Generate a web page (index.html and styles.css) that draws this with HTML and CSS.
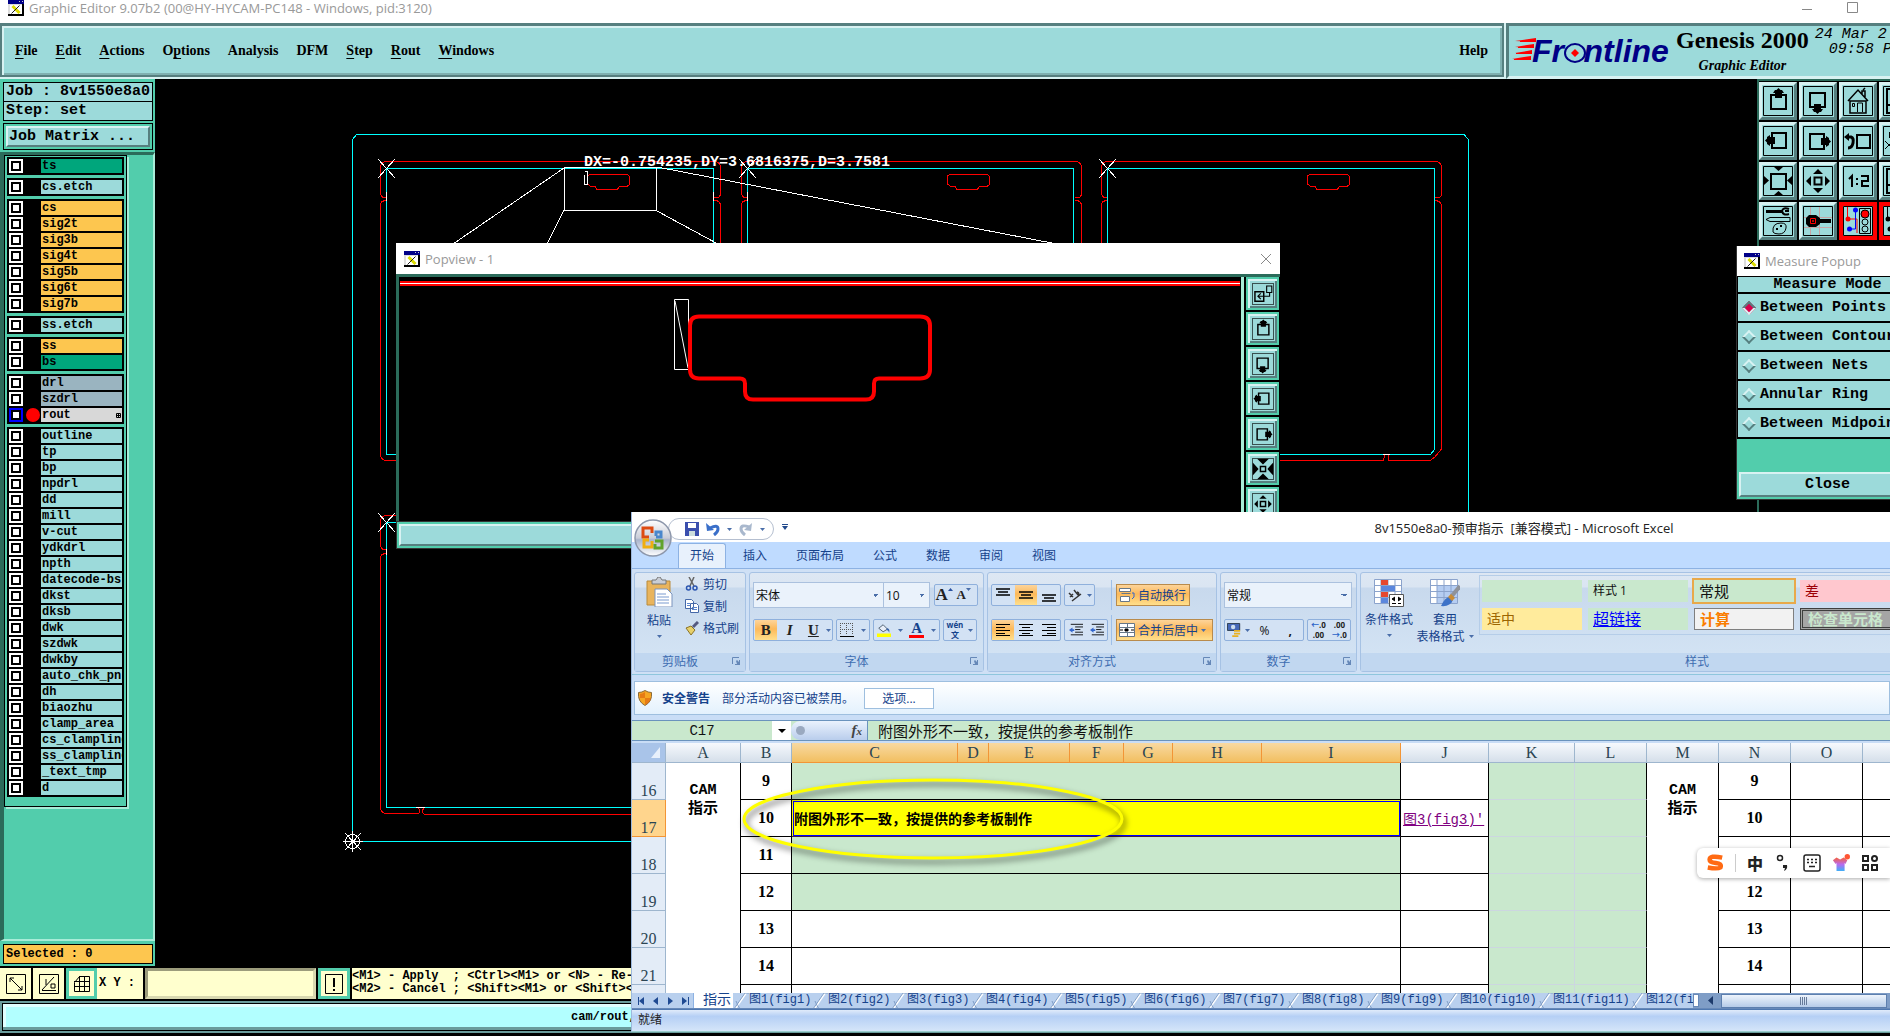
FILE: index.html
```html
<!DOCTYPE html>
<html lang="zh-CN">
<head>
<meta charset="utf-8">
<title>Graphic Editor 9.07b2</title>
<link rel="stylesheet" href="styles.css">
</head>
<body>
<svg class="sprite" aria-hidden="true">
  <symbol id="xwin" viewBox="0 0 16 16"><path fill="#ddd" d="M0 0h16v16H0z"/><path fill="#008" d="M0 0h16v4H0z"/><path fill="#ccc" d="M11 1h1v1h-1zM14 1h1v1h-1z"/><path fill="#fff" d="M2 5h12v9H2z"/><path d="M0 15h16M15 4v12" stroke="#000" stroke-width="2"/><path d="M4.500 6l7 7" stroke="#dd0" stroke-width="3"/><path d="M11.500 5.500l-8 8" stroke="#222" stroke-width="1"/></symbol>
  <symbol id="frame" viewBox="0 0 30 30"><path fill="none" stroke="#000" d="M.5.500h29v29H.5z"/></symbol>
  <symbol id="shift" viewBox="0 0 30 30"><use href="#frame"/><path fill="none" stroke="#000" stroke-width="2" d="M8 9h15v14H8z"/><path d="M15.500 2l2 2h1.500l2 3h-2v5h-7V7h-2l2-3h1.500z"/></symbol>
  <symbol id="left" viewBox="0 0 30 30"><use href="#shift" transform="rotate(-90 15 15)"/></symbol>
  <symbol id="right" viewBox="0 0 30 30"><use href="#shift" transform="rotate(90 15 15)"/></symbol>
  <symbol id="down" viewBox="0 0 30 30"><use href="#shift" transform="rotate(180 15 15)"/></symbol>
  <symbol id="home" viewBox="0 0 30 30"><use href="#frame"/><path fill="none" stroke="#000" stroke-width="1.500" d="M7 15h16v12H7zM5 15l10-11 10 11M19 8V5h3v6M20 4l2-2"/><path fill="none" stroke="#000" d="M14.500 26v-9h5v9M9.500 17.500h2v3h-2z"/></symbol>
  <symbol id="back" viewBox="0 0 30 30"><use href="#frame"/><path fill="none" stroke="#000" stroke-width="2" d="M14 9h13v13H14z"/><path fill="none" stroke="#000" stroke-width="3" d="M4 11h4q3 1 2 6-1 5-5 5"/><path d="M1 11l5-4v8z"/></symbol>
  <symbol id="grow" viewBox="0 0 30 30"><use href="#frame"/><path fill="none" stroke="#000" stroke-width="2" d="M8 8h15v15H8z"/><path d="M11 1h9l-4.500 4zM11 29h9l-4.500-4zM1 10v9l5-4.500zM29 10v9l-5-4.500z"/></symbol>
  <symbol id="spread" viewBox="0 0 30 30"><use href="#frame"/><path fill="none" stroke="#000" stroke-width="2" d="M11.500 11.500h7v7h-7z"/><path d="M10 8h10l-5-5zM10 22h10l-5 5zM8 10v10l-5-5zM22 10v10l5-5z"/></symbol>
  <symbol id="shrink" viewBox="0 0 30 30"><use href="#frame"/><path fill="none" stroke="#000" stroke-width="2" d="M11.500 11.500h7v7h-7z"/><path d="M7 1h16l-8 8zM7 29h16l-8-8zM1 6v18l8-9zM29 6v18l-8-9z"/></symbol>
  <symbol id="popout" viewBox="0 0 30 30"><use href="#frame"/><path fill="none" stroke="#000" stroke-width="2" d="M4 12h12v13H4z"/><path fill="none" stroke="#000" stroke-width="1.500" d="M20 4h7v9h-7zM24 13v5H8m4-4-4 4 4 4"/></symbol>
  <symbol id="ratio" viewBox="0 0 30 30"><use href="#frame"/><path fill="none" stroke="#000" stroke-width="2" d="M6 13l3-3v11M14 12v2M14 17v2M18 10h7v5h-6v5h7"/></symbol>
  <symbol id="tools" viewBox="0 0 30 30"><use href="#frame"/><path d="M3 4h16v3H3z"/><path fill="none" stroke="#000" stroke-width="2" d="M26 3q-6-2-7 2 1 5 7 3M26 5h-4"/><path fill="none" stroke="#000" d="M3 13.500l4-2h20v4H7zM10 26q-1-9 8-9 6 0 5 5-1 6-7 6-5 0-6-2z"/><path d="M13 22h2v2h-2zM17 19h2v2h-2z"/></symbol>
  <symbol id="pad" viewBox="0 0 30 30"><path stroke="#c6a5a5" d="M7.500 0v30M16.500 0v30M0 11.500h30M0 21.500h30"/><use href="#frame"/><path d="M6 9h7l4 3v1h11v4H17v1l-4 3H6l-3-3v-6z"/><path fill="none" stroke="red" d="M7.500 12.500h5v5h-5zM9.500 14.500h1v1h-1z"/></symbol>
  <symbol id="nets" viewBox="0 0 30 30"><use href="#frame"/><path fill="none" stroke="red" d="M4.500 1v12H14v14"/><path fill="none" stroke="#00f" d="M12.500 4v19h-6"/><circle cx="5" cy="13" r="2.500" fill="red"/><circle cx="12.500" cy="4" r="2.500" fill="#00f"/><circle cx="6.500" cy="23" r="2.500" fill="#00f"/><path fill="none" stroke="#000" d="M16.500 2.500h11v25h-11z"/><circle cx="22" cy="8" r="4" fill="red" stroke="#000"/><circle cx="22" cy="16" r="3" fill="none" stroke="#000"/><circle cx="22" cy="23" r="3" fill="none" stroke="#000"/></symbol>
  <symbol id="nets2" viewBox="0 0 30 30"><use href="#frame"/><path fill="none" stroke="#000" d="M4.500 1v12H14M12 23H6"/><circle cx="5" cy="13" r="2.500"/><circle cx="7" cy="23" r="2.500"/></symbol>
  <symbol id="split" viewBox="0 0 30 30"><use href="#frame"/><path fill="none" stroke="#000" stroke-width="2" d="M4 3h22v24H4zM4 19h22"/></symbol>
  <symbol id="cut2" viewBox="0 0 30 30"><use href="#frame"/><path fill="none" stroke="#000" d="M2 15l8 8m-8 0l8-8"/><path d="M6 6h20v6H6z"/></symbol>
  <symbol id="caret" viewBox="0 0 5 3"><path fill="#4a6ea9" d="M0 0h5L2.500 3z"/></symbol>
  <symbol id="launch" viewBox="0 0 8 8"><path fill="none" stroke="#6688b8" d="M7 .5H.5V7"/><path fill="#6688b8" d="M4 4l1-1 2 2V3h1v5H3V7h2z"/></symbol>
  <symbol id="slash" viewBox="0 0 16 16"><path fill="none" stroke="#fff" stroke-width="2" d="M2 16L13 0"/><path fill="none" stroke="#7f9dc6" d="M1 16L12 0M12 0h4M3 8q2 5 4 8"/></symbol>
  <symbol id="lines-l" viewBox="0 0 14 12"><path stroke="#000" d="M0 .5h14M0 3.500h9M0 6.500h14M0 9.500h9M0 11.500h14"/></symbol>
  <symbol id="lines-c" viewBox="0 0 14 12"><path stroke="#000" d="M0 .5h14M3 3.500h8M0 6.500h14M3 9.500h8M0 11.500h14"/></symbol>
  <symbol id="lines-r" viewBox="0 0 14 12"><path stroke="#000" d="M0 .5h14M5 3.500h9M0 6.500h14M5 9.500h9M0 11.500h14"/></symbol>
  <symbol id="three" viewBox="0 0 14 12"><path stroke="#000" stroke-width="1.500" d="M0 3h14M2 6h10M0 9h14"/></symbol>
  <symbol id="indent" viewBox="0 0 16 14"><path stroke="#000" d="M2 .5h14M7 3.500h9M7 6.500h6M7 9.500h9M2 12.500h14"/><path fill="#36c" d="M0 7l4-3v2h2v2H4v2z"/></symbol>
</svg>

<div class="desktop">
<main class="cam">
  <header class="winbar"><svg class="i16"><use href="#xwin"/></svg><span>Graphic Editor 9.07b2 (00@HY-HYCAM-PC148 - Windows, pid:3120)</span>
    <svg class="winbtns" viewBox="0 0 60 16"><path fill="none" stroke="#888" d="M1 9.500h10M46.500 2.500h10v10h-10z"/></svg></header>
  <div class="top">
    <nav class="menubar">
      <button><u>F</u>ile</button><button><u>E</u>dit</button><button><u>A</u>ctions</button><button>O<u>p</u>tions</button><button>Analysis</button><button>DFM</button><button><u>S</u>tep</button><button><u>R</u>out</button><button><u>W</u>indows</button>
      <button class="help">Help</button>
    </nav>
    <div class="brand">
      <svg class="logo" viewBox="0 0 164 34"><path fill="red" d="M24 5v4L3 8l14-2zM22 11v4L3 14l12-2zM20 17v4L3 20l12-2zM19 23v4L0 26l12-2z"/><path stroke="red" d="M8 8.500h16M6 14.500h16M4 20.500h16M2 26.500h17"/><text x="20" y="29" class="logotext">Fr<tspan fill="none">o</tspan>ntline</text><ellipse cx="63" cy="20" rx="10" ry="9" fill="#9cdada" stroke="#000085" stroke-width="2"/><path fill="red" d="M63 16l4 4-4 4-4-4z"/></svg>
      <div class="product"><strong>Genesis 2000</strong><em>Graphic Editor</em></div>
      <div class="clock">24 Mar 2<br><span>09:58 P</span></div>
    </div>
  </div>
  <div class="middle">
    <aside class="side">
      <div class="jobline">Job : 8v1550e8a0</div>
      <div class="jobline">Step: set</div>
      <div class="matrix"><button>Job Matrix ...</button></div>
      <div class="layers"><div class="list">
        <div class="grp"><label class="g"><input type="checkbox"><span>ts</span></label></div>
        <div class="grp"><label><input type="checkbox"><span>cs.etch</span></label></div>
        <div class="grp"><label class="o"><input type="checkbox"><span>cs</span></label><label class="o"><input type="checkbox"><span>sig2t</span></label><label class="o"><input type="checkbox"><span>sig3b</span></label><label class="o"><input type="checkbox"><span>sig4t</span></label><label class="o"><input type="checkbox"><span>sig5b</span></label><label class="o"><input type="checkbox"><span>sig6t</span></label><label class="o"><input type="checkbox"><span>sig7b</span></label></div>
        <div class="grp"><label><input type="checkbox"><span>ss.etch</span></label></div>
        <div class="grp"><label class="o"><input type="checkbox"><span>ss</span></label><label class="g"><input type="checkbox"><span>bs</span></label></div>
        <div class="grp"><label class="s"><input type="checkbox"><span>drl</span></label><label class="s"><input type="checkbox"><span>szdrl</span></label><label class="w"><input type="checkbox" checked><i></i><span>rout<svg viewBox="0 0 5 5"><path fill="none" stroke="#000" d="M.5.500h4v4h-4zM2.500 0v5M0 2.500h5"/></svg></span></label></div>
        <div class="grp"><label><input type="checkbox"><span>outline</span></label><label><input type="checkbox"><span>tp</span></label><label><input type="checkbox"><span>bp</span></label><label><input type="checkbox"><span>npdrl</span></label><label><input type="checkbox"><span>dd</span></label><label><input type="checkbox"><span>mill</span></label><label><input type="checkbox"><span>v-cut</span></label><label><input type="checkbox"><span>ydkdrl</span></label><label><input type="checkbox"><span>npth</span></label><label><input type="checkbox"><span>datecode-bs</span></label><label><input type="checkbox"><span>dkst</span></label><label><input type="checkbox"><span>dksb</span></label><label><input type="checkbox"><span>dwk</span></label><label><input type="checkbox"><span>szdwk</span></label><label><input type="checkbox"><span>dwkby</span></label><label><input type="checkbox"><span>auto_chk_pnl</span></label><label><input type="checkbox"><span>dh</span></label><label><input type="checkbox"><span>biaozhu</span></label><label><input type="checkbox"><span>clamp_area</span></label><label><input type="checkbox"><span>cs_clampline</span></label><label><input type="checkbox"><span>ss_clampline</span></label><label><input type="checkbox"><span>_text_tmp</span></label><label><input type="checkbox"><span>d</span></label></div>
      </div></div>
      <div class="selected">Selected : 0</div>
    </aside>
    <div class="board">
      <svg width="1602" height="887" viewBox="155 79 1602 887" fill="none">
        <g stroke="#0ff" shape-rendering="crispEdges">
          <path d="M352.500 841.500V139.500l4-5H1464l4.500 5V841.500z"/>
          <path d="M386.500 454.500v-286h327v286zM747.500 454.500v-286h326v286zM1107.500 454.500v-286h327v281l-4 5zM386.500 807.500v-285h327v285z"/>
        </g>
        <g stroke="#f00" shape-rendering="crispEdges">
          <path id="rim" d="M386 197q-3 2-5-2l-.5-27q0-6.500 6-6.500H714q6.500 0 6.500 6.500V195q-2 4-6 2M386 201q-4-1-5.500 3v250q0 6 6 6.500H714q6.500 0 6.500-6.500V204q-2-4-6-3"/>
          <use href="#rim" x="361"/>
          <path d="M1107 197q-3 2-5-2l-.5-27q0-6.500 6-6.500H1435q6.500 0 6.500 6.500V195q-2 4-6 2M1107 201q-4-1-5.500 3v250q0 6 6 6.500h276l1-5M1388 455l1 5.500h40q4 0 12-11V204q-2-4-6-3"/>
          <path d="M386 549q-3 2-5-2l-.5-25q0-6.500 6-6.500H714M386 554q-4-1-5.500 3V807q0 6 6 6.500h32q2-2 0-6M424 808q-3 4 0 6h290"/>
          <path id="tab" d="M587.500 176l2-1.500h38l2 2v8l-2 1.500h-8l-2 3.500H597l-2-3.500h-5l-2.500-2z"/>
          <use href="#tab" x="360"/><use href="#tab" x="720"/>
        </g>
        <g stroke="#fff" shape-rendering="crispEdges">
          <path d="M564.500 167.500h92v43h-92zM564 168L453 244M564 210l-17 34M657 211l61 33M657 167L1057 244M585 171.500h2.500v13M584.500 175v9.500h3"/>
          <path d="M378 159l17 19m0-19l-17 19M739 159l17 19m0-19l-17 19M1099 159l17 19m0-19l-17 19M378 513l17 19m0-19l-17 19M386.500 192v9M713.500 192v9M747.500 192v9M1383 454.500h7M416 807.500h9M386.500 549v6"/>
          <path d="M343 841.500h20M352.500 831v21M345 833l16 17m0-17l-16 17"/><circle cx="352.500" cy="841.500" r="7"/>
        </g>
        <text x="584" y="166" class="measure">DX=-0.754235,DY=3.6816375,D=3.7581</text>
      </svg>
    </div>
    <div class="tools">
      <button aria-label="up"><svg><use href="#shift"/></svg></button><button aria-label="down"><svg><use href="#down"/></svg></button><button aria-label="home"><svg><use href="#home"/></svg></button><button aria-label="split"><svg><use href="#split"/></svg></button>
      <button aria-label="left"><svg><use href="#left"/></svg></button><button aria-label="right"><svg><use href="#right"/></svg></button><button aria-label="previous"><svg><use href="#back"/></svg></button><button aria-label="cut"><svg><use href="#cut2"/></svg></button>
      <button aria-label="zoom in"><svg><use href="#grow"/></svg></button><button aria-label="zoom out"><svg><use href="#spread"/></svg></button><button aria-label="ratio"><svg><use href="#ratio"/></svg></button><button aria-label="window"><svg><use href="#split"/></svg></button>
      <button aria-label="tools"><svg><use href="#tools"/></svg></button><button aria-label="pad"><svg><use href="#pad"/></svg></button><button class="on" aria-label="nets"><svg><use href="#nets"/></svg></button><button class="on" aria-label="nets two"><svg><use href="#nets2"/></svg></button>
    </div>
  </div>
  <div class="cmd">
    <button aria-label="drag"><svg viewBox="0 0 22 22"><path fill="none" stroke="#000" d="M1.500 1.500h19v19h-19zM5 5l12 12M5 9V5h4M17 13v4h-4"/></svg></button>
    <button aria-label="angle"><svg viewBox="0 0 22 22"><path fill="none" stroke="#000" d="M1.500 1.500h19v19h-19zM4 17.500h14M4 17L16 4M8 6v6M13 11h4v4h-4z"/></svg></button>
    <button class="lit" aria-label="grid"><svg viewBox="0 0 22 22"><path fill="none" stroke="#000" d="M3.500 9.500l5-6h10v15h-15zM3 8.500h16M3 13.500h16M8.500 3v16M13.500 3v16"/></svg></button>
    <label for="xy">X Y :</label><input id="xy" type="text">
    <button class="lit bang" aria-label="alert"><svg viewBox="0 0 22 22"><path fill="none" stroke="#000" d="M2.500 1.500h17v19h-17z"/><path d="M10 5h2v9h-2zM10 16h2v2h-2z"/></svg></button>
    <pre>&lt;M1&gt; - Apply  ; &lt;Ctrl&gt;&lt;M1&gt; or &lt;N&gt; - Re-s
&lt;M2&gt; - Cancel ; &lt;Shift&gt;&lt;M1&gt; or &lt;Shift&gt;&lt;N</pre>
  </div>
  <footer class="camstatus"><span>cam/rout,</span></footer>
</main>

<section class="popview">
  <header><svg class="i16"><use href="#xwin"/></svg><span>Popview - 1</span><svg class="x" viewBox="0 0 12 12"><path stroke="#888" d="M1 1l10 10M11 1L1 11"/></svg></header>
  <div class="pbody">
    <div class="pcanvas"><svg width="842" height="243" viewBox="399 277 842 243" fill="none"><path stroke="#f00" stroke-width="5" d="M400 283.500h840"/><path stroke="#fff" d="M400 283.500h840M674.500 299.500h14v70h-14zM675 301l13 67"/><path stroke="#f00" stroke-width="4" d="M699 316.500h221q10 0 10 9v44q0 9-10 9h-41q-5 0-5 5v8q0 8-8 8H753q-8 0-8-8v-8q0-5-5-5h-41q-9 0-9-9v-44q0-9 9-9z"/></svg></div>
    <div class="ptools">
      <button aria-label="pop"><svg><use href="#popout"/></svg></button><button aria-label="up"><svg><use href="#shift"/></svg></button><button aria-label="down"><svg><use href="#down"/></svg></button><button aria-label="left"><svg><use href="#left"/></svg></button><button aria-label="right"><svg><use href="#right"/></svg></button><button aria-label="in"><svg><use href="#shrink"/></svg></button><button aria-label="out"><svg><use href="#spread"/></svg></button>
    </div>
  </div>
  <div class="pfoot"><div></div></div>
</section>

<section class="popup">
  <header><svg class="i16"><use href="#xwin"/></svg><span>Measure Popup</span></header>
  <h2>Measure Mode</h2>
  <label><input type="radio" name="mode" checked><i></i>Between Points</label>
  <label><input type="radio" name="mode"><i></i>Between Contours</label>
  <label><input type="radio" name="mode"><i></i>Between Nets</label>
  <label><input type="radio" name="mode"><i></i>Annular Ring</label>
  <label><input type="radio" name="mode"><i></i>Between Midpoint</label>
  <div class="close"><button>Close</button></div>
</section>

<section class="excel">
  <header class="xtitle">
    <svg class="orb" viewBox="0 0 40 40"><defs><linearGradient id="og" x2="0" y2="1"><stop offset="0" stop-color="#fff"/><stop offset=".5" stop-color="#c9cdd8"/><stop offset=".55" stop-color="#a9b4cc"/><stop offset="1" stop-color="#fff"/></linearGradient></defs><circle cx="20" cy="20" r="18" fill="url(#og)" stroke="#8d97ab" stroke-width="1.500"/><g fill="none" stroke-width="3"><path stroke="#dd4b12" d="M16 19h-6V10h9v5"/><path stroke="#4a87cc" d="M23 18v-4h5v5h-5"/><path stroke="#f0ae10" d="M16 22h-5v7h8v-6"/><path stroke="#61a32c" d="M22 23h7v7h-7v-4"/></g></svg>
    <div class="qat">
      <svg viewBox="0 0 14 14"><path fill="#3b4fae" d="M0 0h14v14H0z"/><path fill="#fff" d="M3 1h8v5H3z"/><path fill="#cdd" d="M4 9h6v5H4z"/></svg>
      <svg viewBox="0 0 14 14"><path fill="none" stroke="#3a6fc9" stroke-width="3" d="M4 6q8-4 8 1 0 3-4 6"/><path fill="#3a6fc9" d="M0 1l1 8 7-1z"/></svg>
      <svg class="c"><use href="#caret"/></svg>
      <svg viewBox="0 0 14 14"><path fill="none" stroke="#a9b8cd" stroke-width="3" d="M10 5Q2 2 2 7q0 3 4 6"/><path fill="#a9b8cd" d="M13 1l-1 8-7-1z"/></svg>
      <svg class="c"><use href="#caret"/></svg>
    </div>
    <svg class="more" viewBox="0 0 6 6"><path fill="#224a8d" d="M0 0h6v1H0zM0 2h6L3 6z"/></svg>
    <h1>8v1550e8a0-预审指示&nbsp; [兼容模式] - Microsoft Excel</h1>
  </header>
  <nav class="xtabs"><button class="on">开始</button><button>插入</button><button>页面布局</button><button>公式</button><button>数据</button><button>审阅</button><button>视图</button></nav>
  <div class="ribbon">
    <div class="rg clip"><div class="rc">
      <button class="big"><svg viewBox="0 0 27 30"><path fill="#e9b45c" stroke="#b98a3a" d="M1 4h23v24H1z"/><path fill="#c9cdd5" stroke="#777" d="M6 3h4l2-3h2l2 3h4v4H6z"/><path fill="#fff" stroke="#7a93bd" d="M9 12h12l5 5v13H9z"/><path stroke="#7a9bd0" d="M11 17h9M11 20h12M11 23h12M11 26h12"/></svg>粘贴<svg class="c"><use href="#caret"/></svg></button>
      <div class="stack">
        <button><svg viewBox="0 0 14 14"><path stroke="#666" stroke-width="1.500" d="M4 0l5 9M9 0L5 9"/><circle cx="3.500" cy="11" r="2" fill="none" stroke="#2b55b0" stroke-width="1.500"/><circle cx="10" cy="11" r="2" fill="none" stroke="#2b55b0" stroke-width="1.500"/></svg>剪切</button>
        <button><svg viewBox="0 0 14 14"><path fill="#fff" stroke="#4568a8" d="M.5.500h6l2 2v7h-8zM5.500 4.500h6l2 2v7h-8z"/><path stroke="#5b85cc" d="M7 8.500h5M7 10.500h5M2 4.500h3M2 6.500h3"/></svg>复制</button>
        <button><svg viewBox="0 0 14 14"><path fill="#e7d06a" stroke="#8a7328" d="M1 7l5-2 4 4-4 5z"/><path stroke="#555a80" stroke-width="3" d="M8 6l5-5"/></svg>格式刷</button>
      </div></div><h3>剪贴板<svg><use href="#launch"/></svg></h3></div>
    <div class="rg font"><div class="rc rows">
      <div><select class="ff" aria-label="font"><option>宋体</option></select><select class="fs" aria-label="size"><option>10</option></select>
        <span class="bx gap3"><button class="ser b18">A<svg viewBox="0 0 5 3"><path fill="#2a52a0" d="M0 3h5L2.500 0z"/></svg></button><button class="ser b14">A<svg><use href="#caret"/></svg></button></span></div>
      <div><span class="bx biu"><button class="ser on">B</button><button class="ser it">I</button><button class="ser un">U</button><svg class="c"><use href="#caret"/></svg></span>
        <span class="bx w34"><svg viewBox="0 0 14 14"><path stroke="#555" stroke-dasharray="1 1" d="M.5 0v12M6.500 0v12M12.500 0v12M0 .5h13M0 6.500h13"/><path stroke="#000" d="M0 13.500h14"/></svg><svg class="c"><use href="#caret"/></svg></span>
        <span class="bx w66"><svg viewBox="0 0 16 16"><path fill="#e8eef8" stroke="#456" d="M2 6l5-4 5 5-5 3z"/><path fill="#3d66aa" d="M11 6q4 0 3 5-1-3-3-3z"/><path fill="#ff0" d="M0 12h16v4H0z"/></svg><svg class="c"><use href="#caret"/></svg><b class="acol">A</b><svg class="c"><use href="#caret"/></svg></span>
        <span class="bx w34"><b class="wen"><span>wén</span><span>文</span></b><svg class="c"><use href="#caret"/></svg></span></div>
      </div><h3>字体<svg><use href="#launch"/></svg></h3></div>
    <div class="rg align"><div class="rc rows">
      <div><span class="bx tri"><button aria-label="top"><svg class="up"><use href="#three"/></svg></button><button class="on" aria-label="middle"><svg><use href="#three"/></svg></button><button aria-label="bottom"><svg class="dn"><use href="#three"/></svg></button></span>
        <span class="bx w31"><svg viewBox="0 0 14 14"><path stroke="#333" stroke-width="1.500" fill="none" d="M4 13L13 6M1 5l4 4M2 9l3-3M6 2l4 5q2-2-1-3"/></svg><svg class="c"><use href="#caret"/></svg></span><hr>
        <button class="hot w74"><svg viewBox="0 0 16 14"><path fill="#fff" stroke="#678" d="M.5.500h11v3H.5zM2.500 5.500h9M1.500 8.500h9v5h-9z"/><path fill="none" stroke="#36c" d="M13 5h2v4l-2 2"/></svg>自动换行</button></div>
      <div><span class="bx tri"><button class="on" aria-label="left"><svg><use href="#lines-l"/></svg></button><button aria-label="center"><svg><use href="#lines-c"/></svg></button><button aria-label="right"><svg><use href="#lines-r"/></svg></button></span>
        <span class="bx w44"><svg><use href="#indent"/></svg><svg><use href="#indent"/></svg></span><hr>
        <button class="hot w96"><svg viewBox="0 0 16 14"><path fill="#fff" stroke="#678" d="M.5.500h15v13H.5zM0 4.500h16M0 9.500h16M8.500 0v4M8.500 10v4"/><path stroke="#000" d="M1 7h3M12 7h3M6 6h3v2H6z"/></svg>合并后居中<svg class="c"><use href="#caret"/></svg></button></div>
      </div><h3>对齐方式<svg><use href="#launch"/></svg></h3></div>
    <div class="rg num"><div class="rc rows">
      <div><select class="nf" aria-label="number format"><option>常规</option></select></div>
      <div><span class="bx w79"><svg viewBox="0 0 16 16"><path fill="#4568b8" stroke="#234" d="M.5.500h14v8h-14z"/><circle cx="7" cy="4.500" r="2.500" fill="#cde"/><path fill="#e8b020" d="M8 8h7v2H8zM8 11h7v2H8zM6 14h7v2H6z"/></svg><svg class="c"><use href="#caret"/></svg><button>%</button><button><b>,</b></button></span>
        <span class="bx w44 dec"><b><span><i>←</i>.0</span><span>.00</span></b><b><span>.00</span><span><i>→</i>.0</span></b></span></div>
      </div><h3>数字<svg><use href="#launch"/></svg></h3></div>
    <div class="rg sty"><div class="rc">
      <button class="big b48"><svg viewBox="0 0 30 28"><path fill="#fff" stroke="#8ba3cc" d="M.5.500h27v24H.5zM7 0v25M14 0v25M21 0v25M0 6.500h28M0 12.500h28M0 18.500h28"/><path fill="#e5482f" d="M7 1h7v5H7zM7 13h7v5H7z"/><path fill="#5b87dd" d="M7 7h14v5H7zM7 19h7v5H7z"/><path fill="#fff" stroke="#555" d="M15.500 15.500h14v12h-14z"/><path stroke="#000" d="M21 18l-3 2 3 2M18 24.500h4M24 18l3 2-3 2M24 24.500h3"/></svg>条件格式<svg class="c"><use href="#caret"/></svg></button>
      <button class="big b48"><svg viewBox="0 0 30 28"><path fill="#fff" stroke="#8ba3cc" d="M.5.500h27v24H.5z"/><path fill="#b5cdf2" d="M7 7h20v17H7z"/><path stroke="#8ba3cc" d="M7 0v25M14 0v25M21 0v25M0 6.500h28M0 12.500h28M0 18.500h28"/><path stroke="#8f9299" stroke-width="4" d="M30 7L21 18"/><path fill="#3c72c8" d="M11 27q4-9 9-9l3 3q-3 7-12 6z"/><path fill="#c98c35" d="M18 18l3-3 4 4-3 3z"/></svg>套用<span>表格格式<svg class="c"><use href="#caret"/></svg></span></button>
      <div class="gallery"><button></button><button class="s1">样式 1</button><button class="s2">常规</button><button class="s3">差</button><button class="s4">适中</button><button class="s5">超链接</button><button class="s6">计算</button><button class="s7">检查单元格</button></div>
      </div><h3>样式</h3></div>
  </div>
  <div class="warn"><svg viewBox="0 0 14 16"><path fill="#f6a623" stroke="#8a6a3a" d="M7 .5q3 2 6.500 2 1 9-6.500 13Q-.5 11.500.5 2.500 4 2.500 7 .5z"/><path fill="#e06a10" d="M7 8h6q-1 5-6 7zM7 8V2Q4 4 2 4v4z" opacity=".7"/></svg><b>安全警告</b><span>部分活动内容已被禁用。</span><button>选项...</button></div>
  <div class="fbar"><span class="ref">C17</span><span class="drop"><svg class="c2" viewBox="0 0 8 4"><path d="M0 0h8L4 4z"/></svg></span><span class="fx"><i></i><em>f<small>x</small></em></span><input type="text" aria-label="formula" value="附图外形不一致，按提供的参考板制作"></div>
  <div class="gridwrap">
  <table class="sheet">
    <colgroup><col style="width:34px"><col style="width:75px"><col style="width:51px"><col style="width:166px"><col style="width:31px"><col style="width:81px"><col style="width:54px"><col style="width:49px"><col style="width:89px"><col style="width:139px"><col style="width:88px"><col style="width:86px"><col style="width:72px"><col style="width:72px"><col style="width:72px"><col style="width:72px"><col style="width:72px"></colgroup>
    <thead><tr><th class="corner"><svg viewBox="0 0 9 11"><path fill="#e8f0fb" d="M9 0v11H0z"/></svg></th><th>A</th><th>B</th><th class="h">C</th><th class="h">D</th><th class="h">E</th><th class="h">F</th><th class="h">G</th><th class="h">H</th><th class="h">I</th><th>J</th><th>K</th><th>L</th><th>M</th><th>N</th><th>O</th><th></th></tr></thead>
    <tbody>
    <tr><th>16</th><td class="camcell" rowspan="7">CAM<br>指示</td><td class="n">9</td><td class="gr" colspan="7"></td><td></td><td class="kl"></td><td class="kl last"></td><td class="camcell" rowspan="7">CAM<br>指示</td><td class="n">9</td><td></td><td></td></tr>
    <tr><th class="h">17</th><td class="n">10</td><td class="sel" colspan="7">附图外形不一致，按提供的参考板制作</td><td class="lk"><a href="#fig3">图3(fig3)'</a></td><td class="kl"></td><td class="kl last"></td><td class="n">10</td><td></td><td></td></tr>
    <tr><th>18</th><td class="n">11</td><td class="gr" colspan="7"></td><td></td><td class="kl"></td><td class="kl last"></td><td class="n"></td><td></td><td></td></tr>
    <tr><th>19</th><td class="n">12</td><td class="gr" colspan="7"></td><td></td><td class="kl"></td><td class="kl last"></td><td class="n">12</td><td></td><td></td></tr>
    <tr><th>20</th><td class="n">13</td><td colspan="7"></td><td></td><td class="kl"></td><td class="kl last"></td><td class="n">13</td><td></td><td></td></tr>
    <tr><th>21</th><td class="n">14</td><td colspan="7"></td><td></td><td class="kl"></td><td class="kl last"></td><td class="n">14</td><td></td><td></td></tr>
    <tr class="cutrow"><th></th><td></td><td colspan="7"></td><td></td><td class="kl"></td><td class="kl last"></td><td></td><td></td><td></td></tr>
    </tbody>
  </table>
  </div>
  <svg class="ring" viewBox="0 0 400 96"><ellipse cx="195" cy="44" rx="189" ry="39" fill="none" stroke="#ff0" stroke-width="3"/></svg>
  <div class="sheets">
    <div class="navs"><svg viewBox="0 0 62 10"><path fill="#1f4a92" d="M6 1h1v8H6zM12 1v8l-5-4zM26 1v8l-5-4zM36 1v8l5-4zM50 1v8l5-4zM56 1h1v8h-1z"/></svg></div>
    <div class="strip"><button class="on">指示</button><button><svg><use href="#slash"/></svg>图1(fig1)</button><button><svg><use href="#slash"/></svg>图2(fig2)</button><button><svg><use href="#slash"/></svg>图3(fig3)</button><button><svg><use href="#slash"/></svg>图4(fig4)</button><button><svg><use href="#slash"/></svg>图5(fig5)</button><button><svg><use href="#slash"/></svg>图6(fig6)</button><button><svg><use href="#slash"/></svg>图7(fig7)</button><button><svg><use href="#slash"/></svg>图8(fig8)</button><button><svg><use href="#slash"/></svg>图9(fig9)</button><button class="wide"><svg><use href="#slash"/></svg>图10(fig10)</button><button class="wide"><svg><use href="#slash"/></svg>图11(fig11)</button><button class="wide"><svg><use href="#slash"/></svg>图12(fi</button></div>
    <div class="hscroll"><i></i><svg viewBox="0 0 5 9"><path fill="#1d3a6b" d="M5 0v9L0 4.500z"/></svg><b><svg viewBox="0 0 8 8"><path stroke="#667a99" d="M.5 0v8M2.500 0v8M4.500 0v8M6.500 0v8"/></svg></b></div>
  </div>
  <footer class="xstatus">就绪</footer>
</section>

<div class="ime">
  <svg class="sg" viewBox="0 0 20 20"><path fill="none" stroke="#ff6a13" stroke-width="5" d="M18 4Q4 1 4 6.500q0 3 7 3.500t5 5q-3 2-14 0"/></svg><hr><b>中</b>
  <svg viewBox="0 0 16 18"><circle cx="5" cy="4" r="2.500" fill="none" stroke="#222" stroke-width="1.500"/><path fill="#222" d="M8 11h4q1 4-3 6l1-3H8z"/></svg>
  <svg viewBox="0 0 18 18"><rect x="1" y="1" width="16" height="16" rx="2" fill="none" stroke="#222" stroke-width="1.500"/><path stroke="#222" stroke-width="1.500" stroke-dasharray="2 2" d="M4 5.500h10M4 8.500h10"/><path stroke="#222" stroke-width="1.500" d="M6 12.500h6"/></svg>
  <svg viewBox="0 0 20 20"><defs><linearGradient id="sh" x2="0" y2="1"><stop offset="0" stop-color="#f7603a"/><stop offset=".5" stop-color="#b86af0"/><stop offset="1" stop-color="#3cb0f7"/></linearGradient></defs><path fill="url(#sh)" d="M1 7l4-3 4 2 4-2 4 3-2 4-1-1v9H5v-9l-1 1z"/><circle cx="17" cy="3" r="3" fill="#ff5533"/></svg>
  <svg viewBox="0 0 18 18"><path fill="none" stroke="#222" stroke-width="2" d="M2 2h5v5H2zM2 11h5v5H2zM11 11h5v5h-5z"/><circle cx="13.500" cy="4.500" r="2.500" fill="none" stroke="#222" stroke-width="2"/></svg>
</div>
</div>
</body>
</html>
```
FILE: styles.css
```css
* { box-sizing: border-box; }
body { margin: 0; background: #000; font-family: "Open Sans", "Noto Sans CJK SC", sans-serif; font-size: 12px; }
button, input, select { font: inherit; color: inherit; margin: 0; padding: 0; border: 0; background: none; border-radius: 0; outline: 0; }
h1, h2, h3, pre { margin: 0; font: inherit; }
svg { display: block; flex: none; }
.sprite { position: absolute; width: 0; height: 0; }
.desktop { position: relative; min-height: 100vh; overflow: hidden; display: flex; }
.i16 { width: 16px; height: 16px; }

/* CAM application */
.cam { flex: 1; min-width: 0; display: flex; flex-direction: column; padding-bottom: 3px; font: bold 15px "Liberation Mono", monospace; color: #000; }
.winbar { height: 23px; background: #fff; color: #999; font: 13px "Open Sans", sans-serif; display: flex; align-items: flex-start; gap: 5px; padding: 0 29px 0 8px; line-height: 16px; }
.winbtns { width: 60px; height: 16px; margin-left: auto; }
.top { display: flex; height: 56px; background: #d8f2f2; }
.menubar { flex: 1; display: flex; align-items: center; gap: 18px; padding: 0 14px 0 13px; background: #9cdada; border: 2px solid #567f7f; border-top-width: 3px; box-shadow: inset 2px 2px #d8f2f2, inset -2px -2px #7fb0b0; margin: 0 2px 2px 0; font: bold 14px "Liberation Serif", serif; }
.menubar u { text-underline-offset: 3px; }
.help { margin-left: auto; }
.brand { flex: 0 0 384px; display: flex; background: #9cdada; border: 3px solid #d8f2f2; border-top-color: #567f7f; border-left-color: #567f7f; border-right: 0; overflow: hidden; padding-left: 3px; }
.logo { width: 164px; height: 34px; margin-top: 7px; overflow: visible; }
.logotext { font: italic bold 32px "Liberation Sans", sans-serif; fill: #000085; }
.product { width: 136px; text-align: center; font-family: "Liberation Serif", serif; display: flex; flex-direction: column; white-space: nowrap; }
.product strong { font-size: 24px; line-height: 28px; }
.product em { font-size: 14px; line-height: 24px; }
.clock { font: italic 15px/15px "Liberation Mono", monospace; padding-left: 6px; padding-top: 1px; white-space: nowrap; }
.clock span { padding-left: 14px; }
.middle { flex: 1; display: flex; }
.side { flex: 0 0 155px; background: #52cdac; display: flex; flex-direction: column; padding: 3px 0 2px; white-space: nowrap; }
.jobline { margin: 0 2px 0 3px; height: 20px; line-height: 17px; padding-left: 2px; border: 1px solid #000; background: #9cdada; }
.jobline + .jobline { margin-top: -1px; }
.matrix { margin: 2px 2px 2px 3px; height: 27px; border: 1px solid #000; padding: 2px; }
.matrix button, .close button { display: block; width: 100%; height: 100%; text-align: left; padding-left: 1px; background: #9cdada; border: 2px solid; border-color: #d8f2f2 #567f7f #567f7f #d8f2f2; }
.layers { flex: 1; border: solid; border-width: 3px 2px 2px 4px; border-color: #2b6b5a #a8ecd8 #a8ecd8 #2b6b5a; display: flex; align-items: flex-start; }
.list { width: 123px; border: 1px solid #000; padding: 1px 2px 9px; display: flex; flex-direction: column; gap: 3px; box-shadow: 2px 2px #a8ecd8; }
.grp { background: #000; padding: 2px; display: flex; flex-direction: column; gap: 2px; }
.grp label { display: flex; height: 14px; }
.grp input { appearance: none; width: 14px; height: 14px; background: #fff; border: 2px solid #fff; box-shadow: inset 0 0 0 2px #000; }
.grp input:checked { border-color: #00f; }
.grp i { width: 14px; height: 14px; border-radius: 7px; background: #f00; margin-left: 3px; }
.grp span { width: 81px; margin-left: auto; background: #9cdada; font-size: 12px; line-height: 14px; padding-left: 1px; overflow: hidden; display: flex; align-items: center; justify-content: space-between; }
.grp span svg { width: 5px; height: 5px; margin-right: 1px; }
.grp .g span { background: #00a67c; }
.grp .o span { background: #fdc64f; }
.grp .s span { background: #9ab4c0; }
.grp .w span { background: #d8d8d8; }
.selected { margin: 3px 2px 0 3px; height: 20px; line-height: 18px; padding-left: 2px; background: #fdc64f; border: 1px solid #000; font-size: 12px; }
.board { flex: 1; min-width: 0; overflow: hidden; background: #000; height: 887px; }
.measure { font: bold 15px "Liberation Mono", monospace; fill: #fff; }
.tools { flex: 0 0 133px; overflow: hidden; display: grid; grid-template: repeat(4, 38px) / repeat(4, 38px); gap: 2px; align-content: start; border-left: 2px solid #2b6b5a; border-top: 2px solid #2b6b5a; padding-top: 1px; }
.tools button { background: #9cdada; border: 3px solid; border-color: #d8f2f2 #567f7f #567f7f #d8f2f2; padding: 1px; }
.tools svg { width: 30px; height: 30px; }
.tools .on { box-shadow: inset 0 0 0 2px #f00; border-color: #f00; border-width: 2px; padding: 2px; }
.cmd { height: 35px; background: #000; padding: 2px 0; display: flex; gap: 2px; font-size: 12px; }
.cmd button { width: 31px; background: #ffffce; border: 2px solid #ffffce; padding: 2px; display: grid; place-items: center; }
.cmd button svg { width: 22px; height: 22px; }
.cmd .lit { border: 3px solid #52cdac; padding: 0; }
.cmd .bang { width: 32px; }
.cmd label { background: #ffffce; width: 46px; line-height: 30px; padding-left: 2px; white-space: nowrap; margin-left: -2px; }
.cmd input { width: 171px; background: #ffffce; border: 3px solid; border-color: #9c9c7c #d8d8b0 #d8d8b0 #9c9c7c; }
.cmd pre { flex: 1; background: #ffffce; font: bold 12px/13px "Liberation Mono", monospace; padding: 2px 0; overflow: hidden; }
.camstatus { height: 32px; border: 2px solid #6a9c9c; background: #b2ffff; box-shadow: inset 0 0 0 1px #000, inset 0 -4px #6a9c9c, inset 4px 4px #e0ffff; display: flex; align-items: center; font-size: 12px; padding-left: 569px; }

/* zoomed preview window */
.popview { position: absolute; left: 396px; top: 243px; width: 884px; background: #52cdac; font: 13px "Open Sans", sans-serif; }
.popview header, .popup header { height: 31px; background: #fff; color: #999; display: flex; align-items: center; gap: 5px; padding: 0 8px; }
.popview .x { width: 12px; height: 12px; margin-left: auto; }
.pbody { display: flex; height: 247px; border-left: 3px solid #2b6b5a; border-top: 3px solid #2b6b5a; }
.pcanvas { width: 842px; background: #000; overflow: hidden; }
.ptools { flex: 1; border-left: 3px solid #a8ecd8; background: #000; padding: 0 1px 0 2px; display: flex; flex-direction: column; gap: 2px; overflow: hidden; }
.ptools button { flex: none; height: 33px; border: 2px solid #52cdac; background: #9cdada; box-shadow: inset 2px 2px #d8f2f2, inset -2px -2px #567f7f; display: grid; place-items: center; }
.ptools svg { width: 22px; height: 22px; }
.pfoot { height: 28px; border: 1px solid #333; padding: 2px; }
.pfoot div { height: 100%; background: #9cdada; border: 2px solid; border-color: #d8f2f2 #567f7f #567f7f #d8f2f2; }

/* measure popup */
.popup { position: absolute; left: 1736px; top: 246px; width: 183px; background: #000; border: 1px solid #333; border-top: 0; font: bold 15px "Liberation Mono", monospace; white-space: nowrap; }
.popup header { height: 30px; font: 13px "Open Sans", sans-serif; padding: 0 7px; }
.popup h2 { margin: 1px 1px 0; height: 15px; line-height: 15px; background: #9cdada; text-align: center; }
.popup label { display: flex; align-items: center; gap: 4px; height: 27px; margin: 2px 1px 2px; padding-left: 4px; background: #9cdada; }
.popup input { position: absolute; opacity: 0; }
.popup i { width: 10px; height: 10px; margin: 0 2px; transform: rotate(45deg); border: 2px solid; border-color: #d8f2f2 #567f7f #567f7f #d8f2f2; }
.popup input:checked + i { background: #d8004c; border-color: #567f7f #d8f2f2 #d8f2f2 #567f7f; }
.close { background: #52cdac; margin-top: 2px; padding: 33px 2px 2px; }
.close button { height: 25px; text-align: center; padding: 0; }

/* Excel */
.excel { position: absolute; left: 631px; right: 0; top: 512px; overflow: hidden; background: #c9ddf6; color: #15428b; font: 12px "Open Sans", "Noto Sans CJK SC", sans-serif; white-space: nowrap; border-left: 1px solid #9db9dd; }
.xtitle { height: 30px; background: #fff; display: flex; align-items: center; }
.orb { position: absolute; left: 1px; top: 6px; width: 40px; height: 40px; }
.qat { margin-left: 36px; width: 106px; height: 22px; border: 1px solid #b5bfd0; border-radius: 11px; display: flex; align-items: center; gap: 7px; padding-left: 16px; margin-top: 4px; }
.qat svg { width: 14px; height: 14px; }
svg.c, .qat svg.c, .bx svg.c, .hot svg.c { width: 5px; height: 3px; }
.more { width: 6px; height: 6px; margin-left: 8px; }
.xtitle h1 { flex: 1; text-align: center; color: #222; padding-left: 370px; font-size: 13px; }
.xtabs { height: 26px; background: #bfdbff; display: flex; padding-left: 46px; align-items: flex-end; }
.xtabs button { padding: 0 12px 2px; height: 25px; margin-right: 5px; min-width: 48px; }
.xtabs .on { background: #e8f1fc; border: 1px solid #8db2e3; border-bottom: 0; border-radius: 3px 3px 0 0; padding: 0 11px 2px; }
.ribbon { height: 107px; display: flex; gap: 3px; padding: 3px 2px 2px; background: #cfe0f5; border-top: 1px solid #8db2e3; border-bottom: 1px solid #8fc6dd; }
.rg { flex: none; border: 1px solid #a6c2e4; border-radius: 3px; background: linear-gradient(#dde7f3 0, #dae5f2 14px, #c8d9ed 15px, #d5e5f5); display: flex; flex-direction: column; }
.rc { height: 80px; display: flex; }
.rg h3 { flex: 1; background: #c1d7f0; color: #3e6db0; text-align: center; line-height: 18px; position: relative; padding-right: 20px; }
.rg h3 svg { position: absolute; right: 5px; top: 4px; width: 8px; height: 8px; }
.clip { width: 112px; } .font { width: 235px; } .align { width: 230px; } .num { width: 137px; } .sty { width: 674px; }
.rg.sty h3 { padding: 0; }
.big { display: flex; flex-direction: column; align-items: center; width: 40px; margin-left: 4px; padding-top: 4px; line-height: 17px; }
.big > svg:first-child { width: 27px; height: 30px; margin-bottom: 5px; }
.big > .c { margin-top: 6px; }
.big span { display: flex; align-items: center; gap: 4px; }
.b48 { width: 54px; margin-left: 1px; } .b48 + .b48 { margin-left: 2px; }
.b48 > svg:first-child { width: 30px; height: 28px; margin-bottom: 4px; margin-top: 2px; }
.stack { display: flex; flex-direction: column; padding: 0 0 0 6px; }
.stack button { display: flex; align-items: center; gap: 4px; height: 22px; }
.stack svg { width: 14px; height: 14px; }
.rows { flex-direction: column; padding: 9px 3px 0; gap: 9px; }
.rows > div { display: flex; gap: 3px; align-items: center; height: 26px; }
.rows select { appearance: none; height: 26px; border: 1px solid #abc1de; background: #eaf2fb; color: #111; padding-left: 2px; background-image: linear-gradient(45deg, transparent 50%, #4a6ea9 50%), linear-gradient(-45deg, transparent 50%, #4a6ea9 50%); background-size: 3px 3px; background-position: right 7px center, right 4px center; background-repeat: no-repeat; }
.ff { width: 131px; } .fs { width: 47px; margin-left: -4px; } .nf { width: 128px; }
.bx { display: flex; align-items: center; justify-content: space-around; height: 22px; border: 1px solid #8fb0dc; border-radius: 2px; background: #d3e2f4; }
.bx svg { width: 14px; height: 14px; }
.bx button { height: 20px; min-width: 22px; display: grid; place-items: center; }
.bx button.on, .hot { background: linear-gradient(#fdd49a, #fcb95a 45%, #ffdf8c); }
.hot { height: 22px; border: 1px solid #b98b4c; display: flex; align-items: center; gap: 3px; padding-left: 2px; }
.hot svg { width: 16px; height: 14px; }
.bx .ser { font-family: "Liberation Serif", serif; font-weight: bold; font-size: 15px; color: #222; }
.gap3 .ser { display: flex; align-items: center; min-width: 20px; }
.gap3 .ser svg { width: 5px; height: 3px; margin-bottom: 11px; }
.bx .b18 { font-size: 17px; } .bx .b14 { font-size: 13px; }
.it { font-style: italic; } .un { text-decoration: underline; }
.biu { width: 80px; }
.w31 { width: 31px; } .w34 { width: 34px; } .w44 { width: 44px; } .w66 { width: 67px; } .w74 { width: 74px; } .w79 { width: 80px; } .w96 { width: 97px; }
.gap3 { width: 44px; margin-left: 1px; }
.tri { width: 70px; }
.tri svg { width: 14px; height: 12px; }
.tri .up { margin-bottom: 6px; } .tri .dn { margin-top: 6px; }
.align hr { width: 1px; height: 30px; margin: 0 1px 0 auto; border: 0; background: #9ebfe8; }
.align .hot { flex: none; }
.align .w74 { margin-right: 23px; }
.acol { font: bold 15px/13px "Liberation Serif", serif; border-bottom: 3px solid #f00; padding: 0 2px; }
.wen, .dec b { display: flex; flex-direction: column; font-size: 8px; line-height: 10px; text-align: center; }
.w79 button { color: #111; }
.dec b { color: #222; }
.dec i { font-style: normal; color: #2a62c8; }
.gallery { margin: 2px 0 0 7px; padding: 4px 0 0 2px; height: 60px; width: 450px; border: 1px solid #b5cde8; display: grid; grid-template: 22px 22px / repeat(4, 100px); gap: 6px; align-content: start; text-align: left; }
.gallery button { background: #c9e8cd; text-align: left; padding-left: 5px; line-height: 20px; color: #111; overflow: hidden; }
.gallery .s2 { font-size: 15px; outline: 2px solid #e8a94a; }
.gallery .s3 { background: #ffc7ce; color: #9c0006; font-size: 14px; }
.gallery .s4 { background: #ffeb9c; color: #9c6500; font-size: 14px; }
.gallery .s5 { color: #00f; text-decoration: underline; font-size: 16px; }
.gallery .s6 { background: #f2f2f2; color: #fa7d00; font-weight: bold; font-size: 15px; border: 1px solid #7f7f7f; }
.gallery .s7 { background: #a5a5a5; color: #c9e8cd; font-weight: bold; font-size: 15px; border: 3px double #3f3f3f; line-height: 16px; }
.warn { margin: 6px 0 5px 2px; height: 34px; border: 1px solid #9ebfdf; background: linear-gradient(#fff, #e3f1fd); display: flex; align-items: center; padding-left: 3px; gap: 10px; }
.warn svg { width: 14px; height: 16px; }
.warn span { margin-left: 2px; }
.warn button { width: 70px; height: 21px; border: 1px solid #9ebfdf; background: #fff; }
.fbar { height: 21px; border: 1px solid #6a93bd; border-width: 1px 0; background: #c9e8cd; display: flex; align-items: center; font-size: 15px; color: #111; font-family: "Noto Sans CJK SC", sans-serif; }
.ref { width: 140px; text-align: center; font: 14px "Liberation Mono", monospace; }
.drop { width: 19px; height: 19px; background: #fff; display: grid; place-items: center; }
.c2 { width: 8px; height: 4px; }
.fx { width: 77px; height: 19px; background: linear-gradient(#eaf2fd, #b9cdec); border-right: 1px solid #6a93bd; border-radius: 9px 0 0 9px; display: flex; justify-content: space-between; align-items: center; padding: 0 5px; font: bold 15px "Liberation Serif", serif; color: #444; }
.fx i { width: 9px; height: 9px; border-radius: 5px; background: #9aa9c0; }
.fx small { font-size: 11px; }
.fbar input { flex: 1; padding-left: 10px; line-height: 18px; min-width: 0; }
.gridwrap { margin-top: 2px; height: 250px; overflow: hidden; background: #fff; }
.sheet { table-layout: fixed; width: 1303px; border-collapse: separate; border-spacing: 0; color: #000; }
.sheet td, .sheet th { padding: 0; height: 37px; border-right: 1px solid #000; border-bottom: 1px solid #000; overflow: hidden; }
.sheet th { font: 16px/16px "Liberation Serif", serif; color: #2b4553; background: #e3ecf7; border-color: #9eb6ce; vertical-align: bottom; text-align: center; }
.sheet thead th { height: 20px; background: linear-gradient(#f6f9fd, #d5dfea); vertical-align: middle; }
.sheet thead .h { background: linear-gradient(#f8d9a2, #f2bf60); border-color: #f29536; }
.sheet tbody .h { background: #ffd58d; border-color: #f29536; }
.sheet .corner { background: #a9c4e9; padding-left: 19px; }
.corner svg { width: 9px; height: 11px; }
.camcell { font: bold 15px/19px "Liberation Mono", "Noto Sans CJK SC", monospace; text-align: center; vertical-align: top; }
.sheet td.camcell { padding-top: 18px; border-bottom: 0; }
.n { font: bold 16px "Liberation Serif", serif; text-align: center; }
.gr { background: #c9e8cd; }
.sheet td.sel { background: #ff0; font: bold 14px/20px "Noto Sans CJK SC", sans-serif; padding-left: 2px; outline: 1px solid #00f; outline-offset: -2px; border-bottom: 1px solid #402040; }
.lk { font: 14px "Liberation Mono", "Noto Sans CJK SC", monospace; }
.lk a { color: #800080; padding-left: 2px; }
.sheet td.kl { background: #c9e8cd; border-color: #ccd6e0; }
.sheet td.last { border-right-color: #000; }
.sheet .cutrow td, .sheet .cutrow th { height: 10px; }
.ring { position: absolute; left: 106px; top: 263px; width: 400px; height: 96px; filter: drop-shadow(2px 4px 3px #0009); }
.sheets { height: 16px; background: #b9d0ee; display: flex; font: 12px/15px "Liberation Mono", "Noto Sans CJK SC", monospace; border-bottom: 1px solid #6688b8; }
.navs { width: 62px; padding-top: 3px; border-right: 1px solid #8db2e3; }
.navs svg { width: 62px; height: 10px; }
.strip { flex: 1; min-width: 0; overflow: hidden; display: flex; }
.strip button { flex: none; width: 79px; display: flex; align-items: center; height: 15px; }
.strip .wide { width: 93px; }
.strip svg { width: 16px; height: 16px; }
.strip .on { width: 39px; background: #fff; font-size: 14px; padding-left: 9px; }
.hscroll { width: 197px; background: #7f9dc6; display: flex; align-items: center; gap: 9px; }
.hscroll i { width: 6px; height: 13px; background: #fff; border: 1px solid #6688b8; }
.hscroll svg { width: 5px; height: 9px; }
.hscroll b { width: 166px; height: 14px; border: 1px solid #5d7fae; background: linear-gradient(#eef4fc, #b5cbe8); display: grid; place-items: center; margin-left: -1px; }
.hscroll b svg { width: 8px; height: 8px; }
.xstatus { height: 23px; border-top: 1px solid #4f78b0; background: linear-gradient(#e0ebfa, #b5cff5 30%, #d5e5f9); padding-left: 6px; line-height: 20px; color: #222; border-bottom: 1px solid #9cc; }

/* input method bar */
.ime { position: absolute; left: 1697px; right: 0; top: 848px; height: 30px; background: #fff; border-radius: 6px 0 0 6px; box-shadow: 0 1px 4px #0005; display: flex; align-items: center; gap: 11px; padding-left: 9px; overflow: hidden; font: bold 16px "Noto Sans CJK SC", sans-serif; color: #222; }
.ime svg { width: 18px; height: 18px; }
.ime hr { width: 1px; height: 18px; margin: 0; border: 0; background: #ccc; }
```
